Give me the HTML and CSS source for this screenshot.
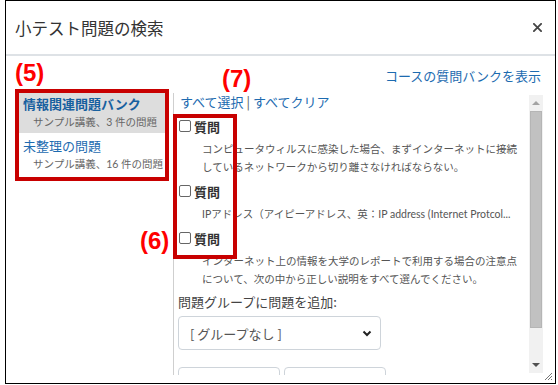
FILE: index.html
```html
<!DOCTYPE html>
<html lang="ja">
<head>
    <meta charset="UTF-8">
    <meta name="viewport" content="width=device-width, initial-scale=1.0">
    <title>小テスト問題の検索</title>
    <link rel="stylesheet" href="styles.css">
</head>
<body>
    <div class="dialog">
        <div class="dialog-header">
            <h2 class="dialog-title">小テスト問題の検索</h2>
            <svg class="close-icon" viewBox="0 0 10 10" width="10" height="10">
                <path d="M1 1 L9 9 M9 1 L1 9" stroke="#444" stroke-width="2" stroke-linecap="square"/>
            </svg>
        </div>
        <div class="dialog-body">
            <div class="bank-col">
                <div class="note-label">(5)</div>
                <ul class="bank-list">
                    <li class="bank-item active">
                        <div class="bank-name">情報関連問題バンク</div>
                        <div class="bank-meta">サンプル講義、3 件の問題</div>
                    </li>
                    <li class="bank-item">
                        <div class="bank-name">未整理の問題</div>
                        <div class="bank-meta">サンプル講義、16 件の問題</div>
                    </li>
                </ul>
            </div>
            <div class="question-col">
                <div class="question-head">
                    <a href="#" class="link">コースの質問バンクを表示</a>
                </div>
                <div class="scroll-area">
                    <div class="scroll-content">
                        <div class="select-links">
                            <a href="#" class="link">すべて選択</a> | <a href="#" class="link">すべてクリア</a>
                        </div>
                        <div class="question">
                            <label class="q-row"><input type="checkbox" class="q-check"> 質問</label>
                            <p class="q-text">コンピュータウィルスに感染した場合、まずインターネットに接続しているネットワークから切り離さなければならない。</p>
                        </div>
                        <div class="question">
                            <label class="q-row"><input type="checkbox" class="q-check"> 質問</label>
                            <p class="q-text single">IPアドレス（アイピーアドレス、英：IP address (Internet Protcol...</p>
                        </div>
                        <div class="question">
                            <label class="q-row"><input type="checkbox" class="q-check"> 質問</label>
                            <p class="q-text">インターネット上の情報を大学のレポートで利用する場合の注意点について、次の中から正しい説明をすべて選んでください。</p>
                        </div>
                        <div class="group-label">問題グループに問題を追加:</div>
                        <div class="group-select">
                            <span>[ グループなし ]</span>
                            <svg viewBox="0 0 10 7" width="10" height="7">
                                <path d="M1.5 1.5 L5 5 L8.5 1.5" fill="none" stroke="#222" stroke-width="2"/>
                            </svg>
                        </div>
                        <div class="button-row">
                            <button class="btn" aria-label="追加"></button>
                            <button class="btn" aria-label="キャンセル"></button>
                        </div>
                    </div>
                    <div class="scrollbar">
                        <div class="sb-btn"><span class="tri-up"></span></div>
                        <div class="sb-thumb"></div>
                        <div class="sb-track"></div>
                        <div class="sb-btn"><span class="tri-down"></span></div>
                    </div>
                </div>
            </div>
        </div>

        <!-- 注釈 -->
        <div class="note-label note-7">(7)</div>
        <div class="note-label note-6">(6)</div>
        <div class="note-box note-box-6"></div>
        <svg class="resize-grip" viewBox="0 0 10 10" width="10" height="10">
            <path d="M9 2 L2 9 M9 5 L5 9 M9 8 L8 9" stroke="#777" stroke-width="1"/>
        </svg>
    </div>
</body>
</html>
```

FILE: styles.css
```css
* {
    box-sizing: border-box;
}

body {
    margin: 0;
    padding: 0;
    background: #fff;
    font-family: "Noto Sans CJK JP", "Noto Sans", sans-serif;
    color: #333;
}

.dialog {
    position: relative;
    margin-left: 5px;
    width: 551px;
    height: 384px;
    border: 1px solid #000;
    background: #fff;
    display: flex;
    flex-direction: column;
}

.dialog-header {
    height: 55px;
    flex: none;
    border-bottom: 2px solid #dee2e6;
    display: flex;
    align-items: center;
    justify-content: space-between;
    padding: 0 13px 0 9px;
}

.dialog-title {
    margin: 0;
    font-size: 16.5px;
    font-weight: normal;
    color: #333;
}

.close-icon {
    width: 9px;
    height: 9px;
}

.dialog-body {
    flex: 1;
    min-height: 0;
    display: flex;
    gap: 4px;
    padding: 0 12px 0 9px;
}

/* 左側：問題バンク一覧 */
.bank-col {
    width: 154px;
    flex: none;
    padding-top: 5px;
}

.note-label {
    font-family: "Liberation Sans", Arial, sans-serif;
    font-size: 24px;
    font-weight: bold;
    line-height: 24px;
    color: #ff0000;
}

.bank-col .note-label {
    margin-bottom: 4px;
}

.bank-list {
    list-style: none;
    margin: 0;
    padding: 0;
    border: 4px solid #c80000;
    height: 92px;
}

.bank-item {
    padding: 2px 4px 2px 4px;
}

.bank-item.active {
    background: #dddddd;
    height: 40px;
}

.bank-item + .bank-item {
    padding-top: 4px;
}

.bank-name {
    font-size: 13px;
    line-height: 18px;
    color: #1d6bb0;
}

.active .bank-name {
    font-weight: bold;
    color: #17609f;
}

.bank-meta {
    font-family: "Lato", "Noto Sans CJK JP", sans-serif;
    font-size: 10.5px;
    line-height: 18px;
    color: #666;
    padding-left: 10px;
    white-space: nowrap;
}

/* 右側：問題一覧 */
.question-col {
    flex: 1;
    display: flex;
    flex-direction: column;
    padding-bottom: 8px;
}

.question-head {
    height: 37px;
    flex: none;
    padding: 9px 2px 0 0;
    text-align: right;
    line-height: 18px;
}

.link {
    font-size: 13px;
    color: #1d6bb0;
    text-decoration: none;
}

.scroll-area {
    flex: 1;
    min-height: 0;
    display: flex;
    border-left: 1px solid #cfcfcf;
}

.scroll-content {
    flex: 1;
    overflow: hidden;
    padding-left: 4px;
}

.select-links {
    font-size: 13px;
    line-height: 18px;
    padding-left: 2px;
    color: #555;
}

.question {
    padding-left: 1px;
    margin-top: 4px;
}

.question:first-of-type {
    margin-top: 5px;
}

.q-row {
    height: 22px;
    display: flex;
    align-items: center;
    gap: 3px;
    font-size: 13px;
    font-weight: bold;
    color: #333;
}

.q-check {
    appearance: none;
    margin: 0;
    width: 12px;
    height: 12px;
    border: 1px solid #666;
    border-radius: 2px;
    background: #fff;
}

.q-text {
    margin: 3px 0 0 23px;
    padding-right: 9px;
    font-family: "Lato", "Noto Sans CJK JP", sans-serif;
    font-size: 10.5px;
    line-height: 18px;
    color: #555;
}

.q-text.single {
    white-space: nowrap;
    overflow: hidden;
}

.group-label {
    margin-top: 5px;
    font-size: 13px;
    line-height: 18px;
    color: #444;
}

.group-select {
    margin-top: 5px;
    width: 203px;
    height: 34px;
    border: 1px solid #ced4da;
    border-radius: 4px;
    display: flex;
    align-items: center;
    justify-content: space-between;
    padding: 0 8px 0 11px;
    font-size: 13px;
    color: #555;
}

.button-row {
    margin-top: 17px;
    display: flex;
    gap: 4px;
}

.btn {
    width: 102px;
    height: 34px;
    border: 1px solid #ced4da;
    border-radius: 4px;
    background: #fff;
}

/* 疑似スクロールバー */
.scrollbar {
    width: 14px;
    flex: none;
    margin: 2px 0 2px;
    background: #f1f1f1;
    display: flex;
    flex-direction: column;
}

.sb-btn {
    height: 16px;
    display: flex;
    align-items: center;
    justify-content: center;
}

.tri-up {
    width: 0;
    height: 0;
    border-left: 4px solid transparent;
    border-right: 4px solid transparent;
    border-bottom: 4px solid #a3a3a3;
}

.tri-down {
    width: 0;
    height: 0;
    border-left: 4px solid transparent;
    border-right: 4px solid transparent;
    border-top: 4px solid #505050;
}

.sb-thumb {
    height: 217px;
    margin: 0 1px;
    background: #c1c1c1;
    border: 1px solid #b5b5b5;
}

.sb-track {
    flex: 1;
}

/* 注釈（赤枠・番号） */
.note-7 {
    position: absolute;
    left: 216px;
    top: 66px;
}

.note-6 {
    position: absolute;
    left: 134px;
    top: 228px;
}

.note-box {
    position: absolute;
    border: 4px solid #c80000;
}

.note-box-6 {
    left: 167px;
    top: 113px;
    width: 64px;
    height: 145px;
}

.resize-grip {
    position: absolute;
    right: 2px;
    bottom: 2px;
}
```
